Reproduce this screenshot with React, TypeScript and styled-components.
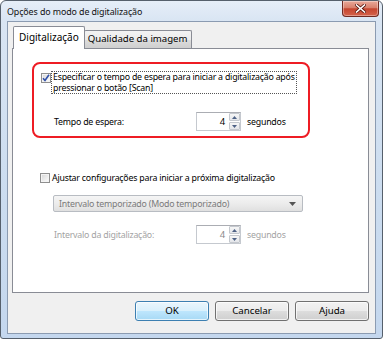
import React from "react";
import styled, { createGlobalStyle } from "styled-components";

const Global = createGlobalStyle`
  html, body { margin: 0; padding: 0; background: #ffffff; }
  body { font-family: "Noto Sans", "Liberation Sans", sans-serif; font-size: 8.8px; letter-spacing: -0.22px; color: #000; }
  * { box-sizing: border-box; }
`;

const Window = styled.div`
  width: 383px;
  height: 339px;
  display: flex;
  flex-direction: column;
  border: 1px solid #56606c;
  border-radius: 6px 6px 3px 3px;
  background: linear-gradient(to bottom, #e6eef8 0px, #d9e5f3 20px, #cbdcef 60%, #c4d7ee 100%);
  overflow: hidden;
`;

const TitleBar = styled.div`
  height: 20px;
  display: flex;
  align-items: flex-start;
  padding-left: 6px;
  flex-shrink: 0;
`;

const Title = styled.div`
  margin-top: 5px;
  line-height: 12px;
  font-size: 8.9px;
  letter-spacing: -0.1px;
  color: #111;
  white-space: nowrap;
`;

const CloseBtn = styled.div`
  margin-left: auto;
  margin-right: 3px;
  width: 37px;
  height: 16px;
  border: 1px solid #6f2a22;
  border-top: none;
  border-radius: 0 0 4px 4px;
  background: linear-gradient(to bottom, #e9a99a 0%, #d9806c 45%, #c5452f 52%, #d4634b 100%);
  display: flex;
  align-items: center;
  justify-content: center;
  box-shadow: inset 0 0 0 1px rgba(255, 255, 255, 0.35);
`;

const Client = styled.div`
  flex: 1;
  margin: 0 6px 4px 6px;
  background: #f0f0f0;
  border: 1px solid #8b9bb1;
  display: flex;
  flex-direction: column;
  padding: 4px 6px 0 4px;
`;

const TabStrip = styled.div`
  display: flex;
  align-items: flex-end;
  padding-left: 1px;
  height: 22px;
  flex-shrink: 0;
`;

const Tab = styled.div<{ $active?: boolean }>`
  position: relative;
  z-index: ${(p) => (p.$active ? 2 : 1)};
  height: ${(p) => (p.$active ? "23px" : "18px")};
  margin-bottom: ${(p) => (p.$active ? "-1px" : "0")};
  border: 1px solid #898c95;
  border-bottom: none;
  border-radius: 2px 2px 0 0;
  background: ${(p) =>
    p.$active ? "#ffffff" : "linear-gradient(to bottom, #f3f3f3 0%, #ebebeb 50%, #dddddd 51%, #cfcfcf 100%)"};
  padding: ${(p) => (p.$active ? "3px 5px 0 5px" : "1px 3px 0 3px")};
  margin-left: ${(p) => (p.$active ? "0" : "-1px")};
  white-space: nowrap;
  line-height: 14px;
  letter-spacing: 0;
  font-size: ${(p) => (p.$active ? "10px" : "9.6px")};
`;

const Panel = styled.div`
  position: relative;
  height: 245px;
  background: #ffffff;
  border: 1px solid #898c95;
  display: flex;
  flex-direction: column;
  flex-shrink: 0;
`;

const Highlight = styled.div`
  position: absolute;
  left: 19px;
  top: 13px;
  width: 278px;
  height: 76px;
  border: 2px solid #ee1c24;
  border-radius: 8px;
  pointer-events: none;
`;

const CheckRow = styled.div<{ $indent: number; $top: number }>`
  display: flex;
  align-items: flex-start;
  padding-left: ${(p) => p.$indent}px;
  margin-top: ${(p) => p.$top}px;
`;

const Box = styled.span<{ $top?: number }>`
  width: 10px;
  height: 10px;
  margin-top: ${(p) => p.$top ?? 0}px;
  flex-shrink: 0;
  border: 1px solid #8f8f8f;
  background: linear-gradient(135deg, #d6d6d6 0%, #eeeeee 60%, #ffffff 100%);
  box-shadow: inset 0 0 0 1px #f4f4f4;
  display: flex;
  align-items: center;
  justify-content: center;
`;

const FocusLabel = styled.div`
  border: 1px dotted #555;
  padding: 0 1px;
  line-height: 10.5px;
  white-space: nowrap;
  min-width: 245px;
`;

const PlainLabel = styled.div`
  margin-left: 2px;
  line-height: 11px;
  white-space: nowrap;
`;

const FieldRow = styled.div<{ $top: number; $disabled?: boolean }>`
  display: flex;
  align-items: center;
  padding-left: 41px;
  margin-top: ${(p) => p.$top}px;
  height: 19px;
  color: ${(p) => (p.$disabled ? "#a3a3a3" : "#000")};
`;

const FieldLabel = styled.div`
  width: 142px;
  white-space: nowrap;
`;

const Spinner = styled.div`
  display: flex;
  width: 45px;
  height: 19px;
  border: 1px solid #c5c9cf;
  border-top-color: #abadb3;
  background: #ffffff;
`;

const SpinValue = styled.div<{ $disabled?: boolean }>`
  flex: 1;
  text-align: right;
  padding-right: 4px;
  line-height: 17px;
  font-size: 9.5px;
  color: ${(p) => (p.$disabled ? "#8a8a8a" : "#000")};
`;

const SpinButtons = styled.div`
  width: 11px;
  display: flex;
  flex-direction: column;
  gap: 1px;
`;

const SpinBtn = styled.div`
  flex: 1;
  border: 1px solid #c4c8ce;
  border-radius: 1px;
  background: linear-gradient(to bottom, #f6f6f6, #e4e6ea);
  display: flex;
  align-items: center;
  justify-content: center;
`;

const Unit = styled.div`
  margin-left: 6px;
  white-space: nowrap;
`;

const Combo = styled.div`
  margin: 11px 0 0 40px;
  width: 250px;
  height: 17px;
  border: 1px solid #b8bcc2;
  border-radius: 2px;
  background: linear-gradient(to bottom, #f5f5f5 0%, #ececec 50%, #e0e0e0 100%);
  display: flex;
  align-items: center;
  padding: 0 6px 0 5px;
  color: #7a7a7a;
`;

const ComboText = styled.div`
  flex: 1;
  white-space: nowrap;
`;

const ButtonRow = styled.div`
  display: flex;
  justify-content: flex-end;
  gap: 6px;
  margin-top: 8px;
`;

const Button = styled.div<{ $default?: boolean }>`
  width: 74px;
  height: 20px;
  border: 1px solid ${(p) => (p.$default ? "#3c7fb1" : "#707070")};
  border-radius: 3px;
  background: ${(p) =>
    p.$default
      ? "linear-gradient(to bottom, #eaf6fd 0%, #d9f0fc 50%, #bee6fd 51%, #a7d9f5 100%)"
      : "linear-gradient(to bottom, #f2f2f2 0%, #ebebeb 50%, #dddddd 51%, #cfcfcf 100%)"};
  box-shadow: inset 0 0 0 1px rgba(255, 255, 255, 0.7);
  display: flex;
  align-items: center;
  justify-content: center;
  line-height: 12px;
  font-size: 9.7px;
  letter-spacing: 0;
`;

const Arrow = ({ up }: { up?: boolean }) => (
  <svg width="5" height="3" viewBox="0 0 5 3">
    <path d={up ? "M0 3 L2.5 0 L5 3 Z" : "M0 0 L2.5 3 L5 0 Z"} fill="#4d6185" />
  </svg>
);

export default function App() {
  return (
    <>
      <Global />
      <Window>
        <TitleBar>
          <Title>Opções do modo de digitalização</Title>
          <CloseBtn>
            <svg width="11" height="9" viewBox="0 0 11 9">
              <path d="M1.5 1 L9.5 8 M9.5 1 L1.5 8" stroke="#5a1a12" strokeWidth="3.2" strokeLinecap="square" />
              <path d="M1.5 1 L9.5 8 M9.5 1 L1.5 8" stroke="#ffffff" strokeWidth="1.6" strokeLinecap="square" />
            </svg>
          </CloseBtn>
        </TitleBar>
        <Client>
          <TabStrip>
            <Tab $active>Digitalização</Tab>
            <Tab>Qualidade da imagem</Tab>
          </TabStrip>
          <Panel>
            <Highlight />
            <CheckRow $indent={28} $top={22}>
              <Box $top={2}>
                <svg width="8" height="8" viewBox="0 0 8 8">
                  <path d="M1 4.2 L3 6.5 L7 0.8" stroke="#2f4fa8" strokeWidth="1.6" fill="none" />
                </svg>
              </Box>
              <FocusLabel>
                Especificar o tempo de espera para iniciar a digitalização após
                <br />
                pressionar o botão [Scan]
              </FocusLabel>
            </CheckRow>
            <FieldRow $top={18}>
              <FieldLabel>Tempo de espera:</FieldLabel>
              <Spinner>
                <SpinValue>4</SpinValue>
                <SpinButtons>
                  <SpinBtn><Arrow up /></SpinBtn>
                  <SpinBtn><Arrow /></SpinBtn>
                </SpinButtons>
              </Spinner>
              <Unit>segundos</Unit>
            </FieldRow>
            <CheckRow $indent={27} $top={42}>
              <Box />
              <PlainLabel>Ajustar configurações para iniciar a próxima digitalização</PlainLabel>
            </CheckRow>
            <Combo>
              <ComboText>Intervalo temporizado (Modo temporizado)</ComboText>
              <svg width="7" height="4" viewBox="0 0 7 4">
                <path d="M0 0 L7 0 L3.5 4 Z" fill="#555" />
              </svg>
            </Combo>
            <FieldRow $top={13} $disabled>
              <FieldLabel>Intervalo da digitalização:</FieldLabel>
              <Spinner>
                <SpinValue $disabled>4</SpinValue>
                <SpinButtons>
                  <SpinBtn><Arrow up /></SpinBtn>
                  <SpinBtn><Arrow /></SpinBtn>
                </SpinButtons>
              </Spinner>
              <Unit>segundos</Unit>
            </FieldRow>
          </Panel>
          <ButtonRow>
            <Button $default>OK</Button>
            <Button>Cancelar</Button>
            <Button>Ajuda</Button>
          </ButtonRow>
        </Client>
      </Window>
    </>
  );
}
